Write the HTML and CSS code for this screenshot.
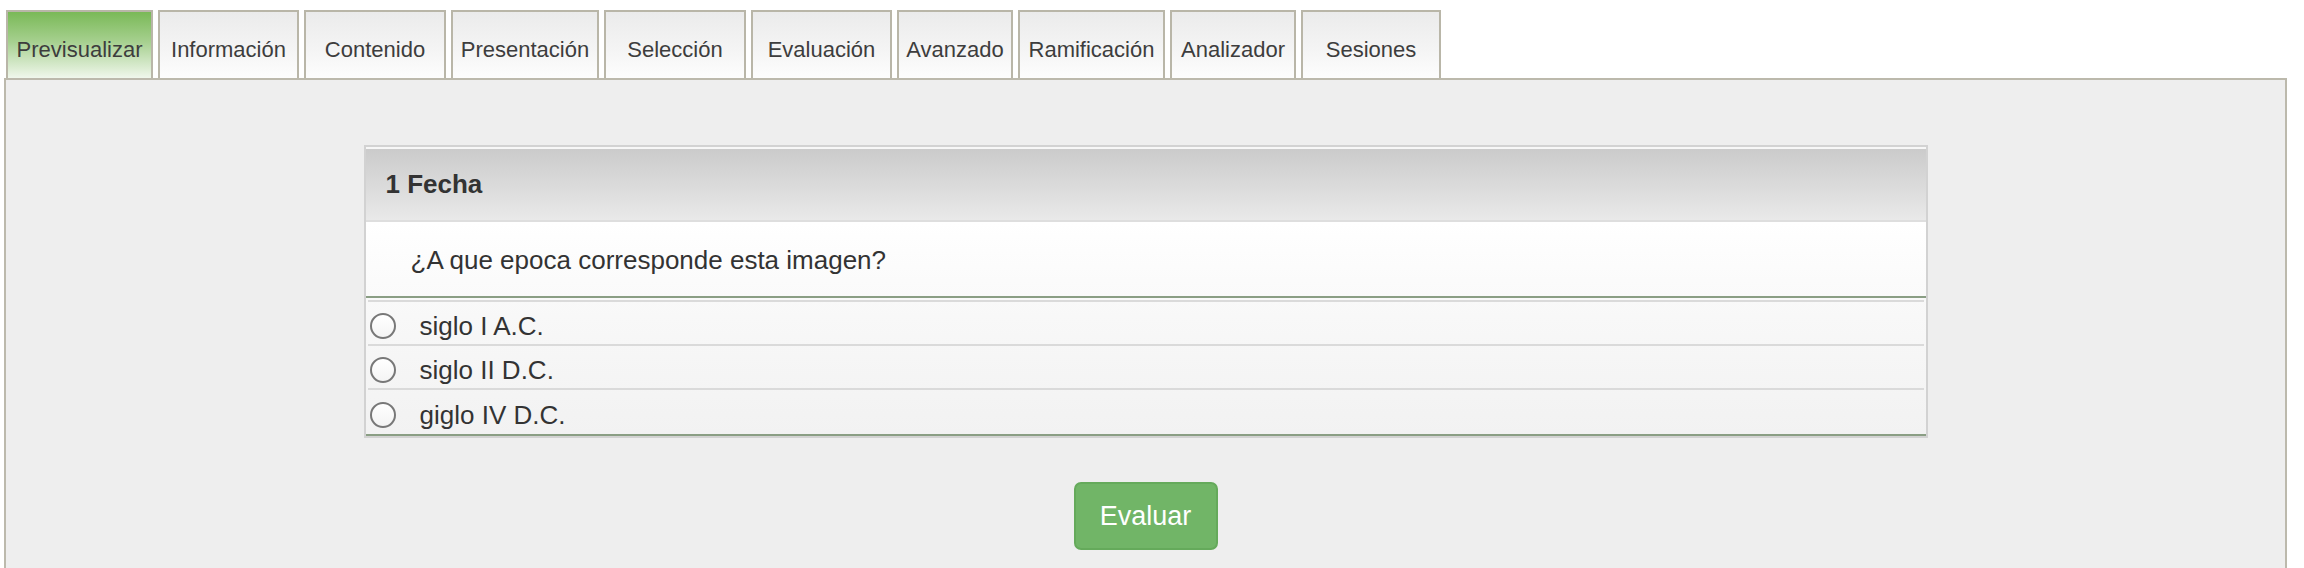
FILE: index.html
```html
<!DOCTYPE html>
<html lang="es">
<head>
<meta charset="utf-8">
<title>Previsualizar</title>
<link rel="stylesheet" href="styles.css">
</head>
<body>
<div class="page">
  <ul class="tabs">
    <li class="tab tab-active tab-previsualizar">Previsualizar</li>
    <li class="tab tab-informacion">Información</li>
    <li class="tab tab-contenido">Contenido</li>
    <li class="tab tab-presentacion">Presentación</li>
    <li class="tab tab-seleccion">Selección</li>
    <li class="tab tab-evaluacion">Evaluación</li>
    <li class="tab tab-avanzado">Avanzado</li>
    <li class="tab tab-ramificacion">Ramificación</li>
    <li class="tab tab-analizador">Analizador</li>
    <li class="tab tab-sesiones">Sesiones</li>
  </ul>
  <div class="panel">
    <div class="card">
      <div class="card-head">1 Fecha</div>
      <div class="question">¿A que epoca corresponde esta imagen?</div>
      <ul class="options">
        <li class="option"><span class="radio"></span><span class="option-label">siglo I A.C.</span></li>
        <li class="option"><span class="radio"></span><span class="option-label">siglo II D.C.</span></li>
        <li class="option option-last"><span class="radio"></span><span class="option-label">giglo IV D.C.</span></li>
      </ul>
    </div>
    <div class="actions">
      <button class="btn-evaluar" type="button">Evaluar</button>
    </div>
  </div>
</div>
</body>
</html>
```

FILE: styles.css
```css
* {
  box-sizing: border-box;
}

html, body {
  margin: 0;
  padding: 0;
  background: #ffffff;
}

body {
  font-family: "Liberation Sans", Arial, Helvetica, sans-serif;
  color: #333333;
  overflow: hidden;
}

.page {
  padding-top: 10px;
  width: 2304px;
}

.tabs {
  list-style: none;
  margin: 0 0 0 6px;
  padding: 0;
  display: flex;
  gap: 5px;
  height: 68px;
}

.tab {
  height: 68px;
  border: 2px solid #b9b6a8;
  border-bottom: none;
  background: linear-gradient(to bottom, #ebebeb 0%, #f4f4f4 55%, #fdfdfd 100%);
  font-size: 22px;
  line-height: 25px;
  color: #3d3d3d;
  text-align: center;
  padding-top: 25px;
  white-space: nowrap;
}

.tab-active {
  background: linear-gradient(to bottom, #7ab957 0%, #a6d08f 45%, #f0f7ec 100%);
}

.tab-previsualizar { width: 147px; }
.tab-informacion { width: 141px; }
.tab-contenido { width: 142px; }
.tab-presentacion { width: 148px; }
.tab-seleccion { width: 142px; }
.tab-evaluacion { width: 141px; }
.tab-avanzado { width: 116px; }
.tab-ramificacion { width: 147px; }
.tab-analizador { width: 126px; }
.tab-sesiones { width: 140px; }

.panel {
  margin-left: 4px;
  width: 2283px;
  min-height: 520px;
  border: 2px solid #bcb9ac;
  border-bottom: none;
  background: #eeeeee;
  padding-top: 65px;
}

.card {
  width: 1564px;
  margin: 0 auto;
  border: 2px solid #d2d2d2;
  background: #f6f6f6;
}

.card-head {
  height: 75px;
  border-top: 2px solid #f7f7f7;
  border-bottom: 2px solid #dedede;
  background: linear-gradient(to bottom, #cbcbcb 0%, #dadada 50%, #e9e9e9 100%);
  font-size: 26px;
  font-weight: bold;
  line-height: 71px;
  padding-left: 20px;
  color: #333333;
}

.question {
  height: 76px;
  border-bottom: 2px solid #8a9e84;
  background: linear-gradient(to bottom, #ffffff 0%, #fafafa 100%);
  font-size: 26px;
  line-height: 76px;
  padding-left: 45px;
  color: #333333;
}

.options {
  list-style: none;
  margin: 0;
  padding: 2px 2px 0 2px;
  border-bottom: 2px solid #8a9e84;
  background: linear-gradient(to bottom, #f9f9f9 0%, #f2f2f2 100%);
}

.option {
  display: flex;
  align-items: center;
  height: 44px;
  border-top: 2px solid #dadada;
  font-size: 26px;
  color: #333333;
  padding-top: 5px;
}

.option-last {
  height: 46px;
  padding-top: 5px;
}

.radio {
  flex: none;
  width: 26px;
  height: 26px;
  margin-left: 2px;
  border: 2px solid #787878;
  border-radius: 50%;
  background: linear-gradient(to bottom, #ffffff 0%, #f4f4f4 100%);
}

.option-label {
  margin-left: 24px;
  line-height: 30px;
}

.actions {
  display: flex;
  justify-content: center;
  padding-top: 44px;
}

.btn-evaluar {
  width: 144px;
  height: 68px;
  border: 2px solid #65aa5b;
  border-radius: 7px;
  background: #71b567;
  color: #ffffff;
  font-family: "Liberation Sans", Arial, Helvetica, sans-serif;
  font-size: 27px;
  padding: 0;
  cursor: pointer;
}
```
